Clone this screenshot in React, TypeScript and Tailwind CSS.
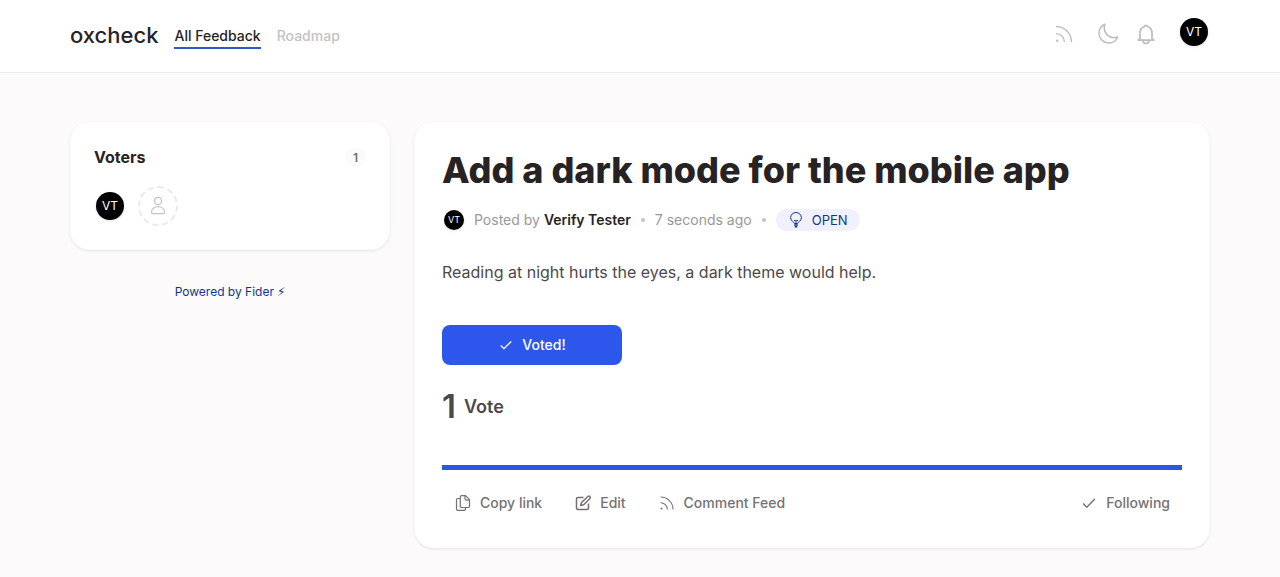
import type { ReactNode } from "react";
import clsx from "clsx";

type IconProps = { className?: string };

const IconRSS = ({ className }: IconProps) => (
  <svg viewBox="0 0 20 20" fill="none" stroke="currentColor" strokeWidth="1.3" className={className} aria-hidden="true">
    <path d="M2 2.500c8.600 0 15.500 6.900 15.500 15.500M2 9.600c4.600 0 8.400 3.800 8.400 8.400" />
    <circle cx="3.200" cy="16.800" r="1.200" fill="currentColor" stroke="none" />
  </svg>
);

const IconMoon = ({ className }: IconProps) => (
  <svg viewBox="0 0 24 24" fill="none" stroke="currentColor" strokeWidth="1.5" strokeLinejoin="round" className={className} aria-hidden="true">
    <path d="M21.752 15.002A9.718 9.718 0 0118 15.750c-5.385 0-9.750-4.365-9.750-9.750 0-1.330.266-2.597.748-3.752A9.753 9.753 0 003 11.250C3 16.635 7.365 21 12.750 21a9.753 9.753 0 009.002-5.998z" />
  </svg>
);

const IconBell = ({ className }: IconProps) => (
  <svg viewBox="0 0 24 24" fill="none" stroke="currentColor" strokeWidth="1.7" strokeLinejoin="round" className={className} aria-hidden="true">
    <path d="M6 17v-6.200c0-3 1.700-5.300 4.200-6.100a1.900 1.900 0 013.600 0c2.500.8 4.200 3.100 4.200 6.100V17" />
    <path d="M3.500 18.200h17M6 16.500l-1.800 1.700M18 16.500l1.800 1.700" />
    <path d="M9 18.500a3 3 0 006 0" />
  </svg>
);

const IconUser = ({ className }: IconProps) => (
  <svg viewBox="0 0 20 20" fill="none" stroke="currentColor" strokeWidth="1.2" className={className} aria-hidden="true">
    <circle cx="10" cy="5" r="3.600" />
    <path d="M3.500 16.300c0-3.200 2.700-5.600 6.500-5.600s6.500 2.400 6.500 5.600c0 .9-.6 1.400-1.500 1.400H5c-.9 0-1.500-.5-1.500-1.400z" />
  </svg>
);

const IconBulb = ({ className }: IconProps) => (
  <svg viewBox="0 0 16 16" fill="none" stroke="currentColor" className={className} aria-hidden="true">
    <path d="M6.400 11.500c0-1.600-3.800-2.300-3.800-5.800a5.400 5.200 0 0110.800 0c0 3.500-3.800 4.200-3.800 5.800z" />
    <path d="M6 8.500h1.500L8 9l.5-.5H10M8 9v2.500" />
    <path d="M6.200 13h3.600M6.800 14.800h2.400" strokeWidth="1.4" />
  </svg>
);

const IconCheck = ({ className }: IconProps) => (
  <svg viewBox="0 0 16 16" fill="none" stroke="currentColor" strokeWidth="1.3" className={className} aria-hidden="true">
    <path d="M2.800 8.500l3.200 3.200 7.200-7.200" />
  </svg>
);

const IconCopy = ({ className }: IconProps) => (
  <svg viewBox="-1 -1 18 18" fill="none" stroke="currentColor" strokeWidth="1.2" strokeLinejoin="round" className={className} aria-hidden="true">
    <path d="M5.300 2a1.300 1.300 0 011.300-1.300h3.900l4 4v6.500a1.300 1.300 0 01-1.300 1.300H6.600a1.300 1.300 0 01-1.300-1.300z" />
    <path d="M10 .7V3.800a1.300 1.300 0 001.300 1.300h3.200" />
    <path d="M5.300 3.500H2.800a1.300 1.300 0 00-1.300 1.300V14a1.300 1.300 0 001.300 1.300h6.400A1.300 1.300 0 0010.500 14v-1.500" />
  </svg>
);

const IconEdit = ({ className }: IconProps) => (
  <svg viewBox="-1 -1 18 18" fill="none" stroke="currentColor" strokeWidth="1.5" strokeLinejoin="round" className={className} aria-hidden="true">
    <path d="M8.500 2.500H3A1.500 1.500 0 001.500 4v9A1.500 1.500 0 003 14.500h9a1.500 1.500 0 001.500-1.500V8.500" />
    <path d="M12.900 1.500a1.400 1.400 0 012 2L8.700 9.700l-3 .8.800-3z" />
  </svg>
);

const avatarSizes = {
  small: "size-5 text-[9px]",
  normal: "size-7 text-xs",
};

const Avatar = ({ size = "normal" }: { size?: "small" | "normal" }) => (
  <span
    className={clsx(
      "flex shrink-0 items-center justify-center rounded-full bg-black text-white shadow-[0_1px_3px_rgba(0,0,0,0.12)]",
      avatarSizes[size],
    )}
  >
    VT
  </span>
);

const ActionButton = ({ icon, label }: { icon: ReactNode; label: string }) => (
  <button className="flex h-10 items-center gap-2 rounded-md px-3 text-sm font-medium text-[#757172]">
    {icon}
    {label}
  </button>
);

const Header = () => (
  <header className="border-b border-[#ececec] bg-white">
    <div className="mx-auto flex h-18 max-w-[1140px] items-center justify-between">
      <div className="flex items-center gap-4">
        <a href="#" className="pb-0.5 text-[22px] font-medium text-[#272325]">
          oxcheck
        </a>
        <nav className="flex gap-4 text-sm font-medium">
          <a href="#" className="border-b-2 border-[#3457c4] pt-[3px] pb-px text-[#272325]">
            All Feedback
          </a>
          <a href="#" className="pt-[3px] text-[#c5c2c3]">
            Roadmap
          </a>
        </nav>
      </div>
      <div className="flex items-center pr-0.5 pb-1 text-[#bdbdbd]">
        <button aria-label="Feed" className="mr-[22px]">
          <IconRSS className="size-5" />
        </button>
        <button aria-label="Switch theme" className="mr-3.5">
          <IconMoon className="size-6" />
        </button>
        <button aria-label="Notifications" className="mr-[22px]">
          <IconBell className="size-6" />
        </button>
        <button aria-label="Account" className="mb-1">
          <Avatar />
        </button>
      </div>
    </div>
  </header>
);

const VotersPanel = () => (
  <aside className="w-80 shrink-0">
    <section className="rounded-[20px] bg-white px-6 pt-[23px] pb-6 shadow-[0_1px_3px_rgba(0,0,0,0.1)]">
      <div className="flex items-center justify-between">
        <h2 className="text-base font-bold text-[#272325]">Voters</h2>
        <span className="rounded-full bg-[#fcfbfc] px-2 pt-[3px] pb-px text-xs font-semibold text-[#757172]">1</span>
      </div>
      <div className="mt-[17px] flex items-center gap-3.5 pl-0.5">
        <Avatar />
        <span className="flex size-10 items-center justify-center rounded-full border-2 border-dashed border-[#ebe9ea] text-[#c5c2c3]">
          <IconUser className="size-5" />
        </span>
      </div>
    </section>
    <div className="mt-[34px] text-center text-xs">
      <a href="#" className="text-[#123885]">
        Powered by Fider {"\u26A1\uFE0E"}
      </a>
    </div>
  </aside>
);

const PostDetails = () => (
  <main className="min-w-0 flex-1 rounded-[20px] bg-white px-7 pt-7 pb-[25px] shadow-[0_1px_3px_rgba(0,0,0,0.1)]">
    <h1 className="text-4xl font-extrabold text-[#272325]">Add a dark mode for the mobile app</h1>

    <div className="mt-4 flex h-7 items-center gap-2.5 pl-0.5 text-sm text-[#9b9899]">
      <Avatar size="small" />
      <span>
        Posted by <span className="font-semibold text-[#272325]">Verify Tester</span>
      </span>
      <span className="size-1 rounded-full bg-[#c5c2c3]" />
      <span>7 seconds ago</span>
      <span className="size-1 rounded-full bg-[#c5c2c3]" />
      <span className="flex items-center gap-2 rounded-full bg-[#f1f0fe] px-3 py-px text-[13px]/5 text-[#123885]">
        <IconBulb className="size-4" />
        OPEN
      </span>
    </div>

    <p className="mt-[26px] text-base text-[#4d494a]">Reading at night hurts the eyes, a dark theme would help.</p>

    <button className="mt-[41px] flex h-10 w-[180px] items-center justify-center gap-2 rounded-lg bg-[#2d57ec] text-sm font-medium text-white">
      <IconCheck className="size-4" />
      Voted!
    </button>

    <div className="mt-5 flex h-11 items-center gap-2 font-semibold text-[#4d494a]">
      <span className="text-[33px]">1</span>
      <span className="text-lg">Vote</span>
    </div>

    <div className="mt-9 flex items-center justify-between border-t-[5px] border-[#2b57e2] pt-[13px]">
      <div className="flex gap-2">
        <ActionButton icon={<IconCopy className="size-[18px]" />} label="Copy link" />
        <ActionButton icon={<IconEdit className="size-[18px]" />} label="Edit" />
        <ActionButton icon={<IconRSS className="mx-px size-4" />} label="Comment Feed" />
      </div>
      <ActionButton icon={<IconCheck className="size-[18px]" />} label="Following" />
    </div>
  </main>
);

export default function App() {
  return (
    <div className="min-h-screen bg-[#fcfafb] font-['Inter',sans-serif]">
      <Header />
      <div className="mx-auto flex max-w-[1140px] items-start gap-6 pt-[49px] pb-7">
        <VotersPanel />
        <PostDetails />
      </div>
    </div>
  );
}
